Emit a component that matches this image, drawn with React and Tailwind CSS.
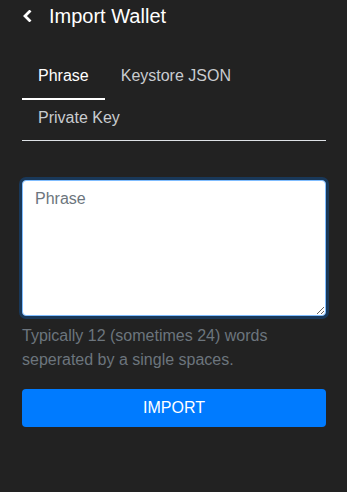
import React, { useState } from "react";

const tabs = ["Phrase", "Keystore JSON", "Private Key"];

export default function App() {
  const [active, setActive] = useState("Phrase");

  return (
    <div className="w-[347px] h-[492px] bg-[#222222] font-['Liberation_Sans',Arial,sans-serif] text-white">
      {/* Header */}
      <div className="flex items-center h-[32px] pl-[22px]">
        <svg viewBox="0 0 10 12" className="w-[10px] h-[12px]" fill="none">
          <path d="M7.5 1.5 L3 6 L7.5 10.5" stroke="#fff" strokeWidth="2.8" strokeLinecap="square" strokeLinejoin="miter" />
        </svg>
        <h1 className="ml-[17px] text-[20px] leading-[24px] text-white">Import Wallet</h1>
      </div>

      <div className="pl-[22px] pr-[21px]">
        {/* Tabs */}
        <div className="mt-[26px] flex flex-wrap">
          {tabs.map((t) => (
            <button
              key={t}
              onClick={() => setActive(t)}
              className={
                "px-4 pt-[6px] pb-[10px] text-[16px] leading-[24px] border-b-2 " +
                (active === t ? "border-white text-white" : "border-transparent text-[#c9ccd0]")
              }
            >
              {t}
            </button>
          ))}
        </div>
        <div className="-mt-[2px] h-px bg-[#dee2e6]" />

        {/* Phrase input */}
        <textarea
          placeholder="Phrase"
          className="mt-[39px] block w-full h-[136px] bg-white rounded-[4px] border border-[#80bdff] shadow-[0_0_0_3px_rgba(0,123,255,0.25)] px-3 py-[6px] text-[16px] leading-[24px] text-[#495057] placeholder:text-[#6c757d] outline-none"
        />

        <p className="mt-[8px] text-[16px] leading-[24px] text-[#6c757d]">
          Typically 12 (sometimes 24) words seperated by a single spaces.
        </p>

        <button className="mt-[17px] w-full h-[38px] rounded-[4px] bg-[#007bff] text-white text-[16px] leading-[24px]">
          IMPORT
        </button>
      </div>
    </div>
  );
}
